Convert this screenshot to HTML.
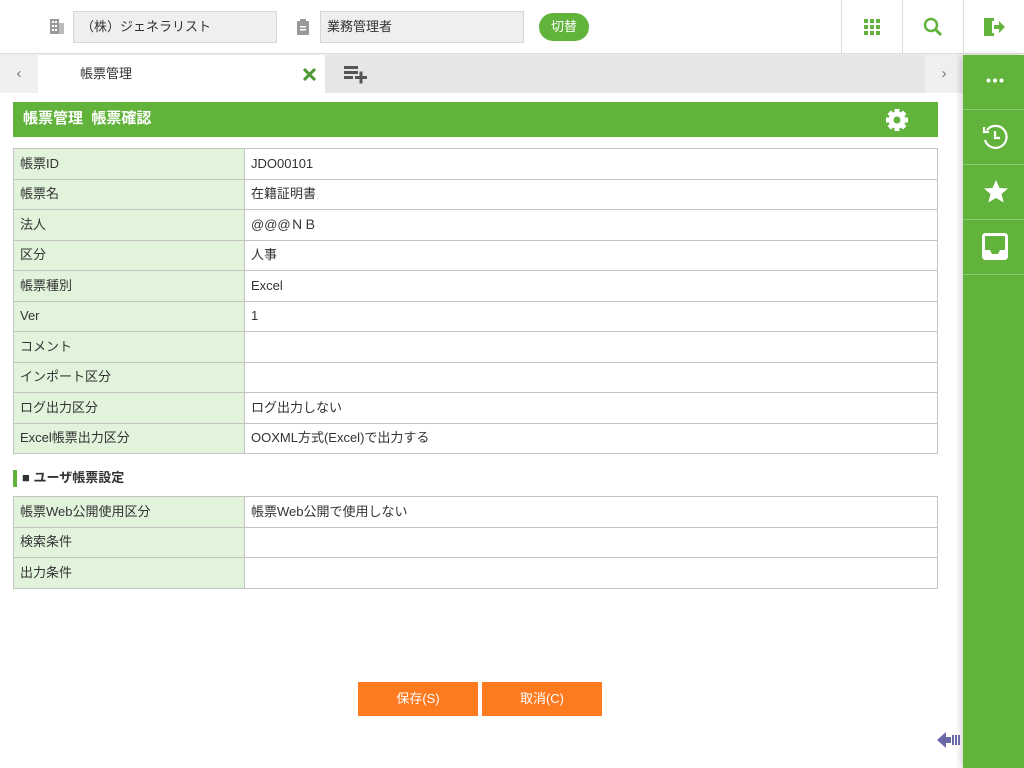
<!DOCTYPE html>
<html><head><meta charset="utf-8"><style>
*{margin:0;padding:0;box-sizing:border-box}
body{width:1024px;height:768px;position:relative;background:#fff;font-family:"Liberation Sans","Noto Sans CJK JP",sans-serif;font-size:13px;color:#333;overflow:hidden}
.abs{position:absolute}
.inp{position:absolute;top:11px;height:32px;background:#efefef;border:1px solid #d6d6d6;padding-left:7px;line-height:30px;font-size:13px;color:#333}
.sep{position:absolute;top:0;width:1px;height:54px;background:#ddd}
table{border-collapse:collapse;position:absolute;left:13px;width:925px}
td{border:1px solid #c4c4c4;height:30.5px;padding:0 6px;font-size:13px;color:#333;vertical-align:middle;line-height:14px}
td.h{background:#e2f3dc;width:231px}
.side div{height:55px;border-bottom:1px solid #8cc870}
.btn{position:absolute;top:682px;width:120px;height:34px;background:#fd7a21;color:#fff;text-align:center;line-height:34px;font-size:13px}
</style></head><body>
<div class="abs" style="left:0;top:0;width:1024px;height:54px;border-bottom:1px solid #ddd;box-shadow:0 1px 3px rgba(0,0,0,.12)"></div>
<svg class="abs" style="left:49px;top:18px" width="16" height="18"><rect x="1" y="1" width="9" height="15" fill="#999"/><rect x="10" y="5" width="5" height="11" fill="#bbb"/><g fill="#fff"><rect x="3" y="3" width="2" height="2"/><rect x="6" y="3" width="2" height="2"/><rect x="3" y="7" width="2" height="2"/><rect x="6" y="7" width="2" height="2"/><rect x="3" y="11" width="2" height="2"/><rect x="6" y="11" width="2" height="2"/></g></svg>
<div class="inp" style="left:73px;width:204px">（株）ジェネラリスト</div>
<svg class="abs" style="left:296px;top:19px" width="14" height="17"><rect x="1" y="2" width="12" height="14" rx="1" fill="#999"/><rect x="4" y="0" width="6" height="4" fill="#999"/><g fill="#fff"><rect x="4" y="7" width="6" height="1.5"/><rect x="4" y="10" width="6" height="1.5"/></g></svg>
<div class="inp" style="left:320px;width:204px;padding-left:6px">業務管理者</div>
<div class="abs" style="left:539px;top:13px;width:50px;height:28px;border-radius:14px;background:#62b33c;color:#fff;text-align:center;line-height:28px;font-size:13px">切替</div>
<div class="sep" style="left:841px"></div><div class="sep" style="left:902px"></div><div class="sep" style="left:963px"></div>
<svg class="abs" style="left:864px;top:19px" width="16" height="16" fill="#62b33c"><rect x="0" y="0" width="4" height="4"/><rect x="6" y="0" width="4" height="4"/><rect x="12" y="0" width="4" height="4"/><rect x="0" y="6" width="4" height="4"/><rect x="6" y="6" width="4" height="4"/><rect x="12" y="6" width="4" height="4"/><rect x="0" y="12" width="4" height="4"/><rect x="6" y="12" width="4" height="4"/><rect x="12" y="12" width="4" height="4"/></svg>
<svg class="abs" style="left:923px;top:17px" width="20" height="20" fill="none" stroke="#62b33c" stroke-width="2.5"><circle cx="8" cy="8" r="6"/><path d="M12.5 12.5L18 18" stroke-width="3"/></svg>
<svg class="abs" style="left:983px;top:17px" width="22" height="20" fill="#62b33c"><path d="M1 1h10v3H6v12h5v3H1z"/><path d="M3 2l6 2v15l-6-2z"/><path d="M11 8h5V4l6 6-6 6v-4h-5z"/></svg>
<div class="abs" style="left:0;top:55px;width:963px;height:38px;background:#e6e6e6"></div>
<div class="abs" style="left:0;top:55px;width:38px;height:38px;background:#efefef;color:#777;text-align:center;line-height:38px;font-size:15px">‹</div>
<div class="abs" style="left:925px;top:55px;width:38px;height:38px;background:#efefef;color:#777;text-align:center;line-height:38px;font-size:15px">›</div>
<div class="abs" style="left:38px;top:55px;width:287px;height:38px;background:#fff;line-height:38px;padding-left:42px;font-size:13px">帳票管理</div>
<svg class="abs" style="left:303px;top:68px" width="13" height="13" stroke="#4f9a36" stroke-width="3"><path d="M1 1L12 12M12 1L1 12"/></svg>
<svg class="abs" style="left:344px;top:66px" width="24" height="18" fill="#555"><rect x="0" y="0" width="14" height="3"/><rect x="0" y="5" width="14" height="3"/><rect x="0" y="10" width="9" height="3"/><rect x="11" y="10" width="12" height="3"/><rect x="15.5" y="5.5" width="3" height="12"/></svg>
<div class="abs side" style="left:963px;top:55px;width:61px;height:713px;background:#62b33c;box-shadow:-3px 0 5px rgba(0,0,0,.15)">
<div></div><div></div><div></div><div></div></div>
<svg class="abs" style="left:986px;top:78px" width="18" height="5" fill="#fff"><circle cx="2.5" cy="2.5" r="2"/><circle cx="9" cy="2.5" r="2"/><circle cx="15.5" cy="2.5" r="2"/></svg>
<svg class="abs" style="left:981px;top:123px" width="28" height="28" fill="none" stroke="#fff" stroke-width="2.2"><path d="M6 7A11 11 0 1 1 4 17"/><path d="M3 4l0 5 5 0"/><path d="M14 8v7h5"/></svg>
<svg class="abs" style="left:983px;top:179px" width="26" height="25" fill="#fff"><path d="M13 1l3.5 8 8.5.5-6.5 5.5 2.2 8.5L13 19l-7.7 4.5 2.2-8.5L1 9.5l8.5-.5z"/></svg>
<svg class="abs" style="left:982px;top:233px" width="26" height="27"><rect x="1.5" y="1.5" width="23" height="24" rx="2" fill="none" stroke="#fff" stroke-width="3"/><path d="M1 17h7l2 4h6l2-4h7v9H1z" fill="#fff"/></svg>
<div class="abs" style="left:13px;top:102px;width:925px;height:35px;background:#62b33c;color:#fff;font-weight:bold;font-size:15px;line-height:33px;padding-left:10px">帳票管理&nbsp;&nbsp;帳票確認</div>
<svg class="abs" style="left:885px;top:108px" width="24" height="24" viewBox="0 0 24 24"><g fill="#fff"><rect x="9.5" y="1" width="5" height="22"/><rect x="9.5" y="1" width="5" height="22" transform="rotate(45 12 12)"/><rect x="9.5" y="1" width="5" height="22" transform="rotate(90 12 12)"/><rect x="9.5" y="1" width="5" height="22" transform="rotate(135 12 12)"/><circle cx="12" cy="12" r="8.5"/></g><circle cx="12" cy="12" r="3.5" fill="#62b33c"/></svg>
<table style="top:148px">
<tr><td class="h">帳票ID</td><td>JDO00101</td></tr>
<tr><td class="h">帳票名</td><td>在籍証明書</td></tr>
<tr><td class="h">法人</td><td>@@@ＮＢ</td></tr>
<tr><td class="h">区分</td><td>人事</td></tr>
<tr><td class="h">帳票種別</td><td>Excel</td></tr>
<tr><td class="h">Ver</td><td>1</td></tr>
<tr><td class="h">コメント</td><td></td></tr>
<tr><td class="h">インポート区分</td><td></td></tr>
<tr><td class="h">ログ出力区分</td><td>ログ出力しない</td></tr>
<tr><td class="h">Excel帳票出力区分</td><td>OOXML方式(Excel)で出力する</td></tr>
</table>
<div class="abs" style="left:13px;top:470px;width:4px;height:17px;background:#62b33c"></div>
<div class="abs" style="left:22px;top:469px;font-weight:bold;font-size:13px;line-height:18px">■ ユーザ帳票設定</div>
<table style="top:496px">
<tr><td class="h">帳票Web公開使用区分</td><td>帳票Web公開で使用しない</td></tr>
<tr><td class="h">検索条件</td><td></td></tr>
<tr><td class="h">出力条件</td><td></td></tr>
</table>
<div class="btn" style="left:358px">保存(S)</div>
<div class="btn" style="left:482px">取消(C)</div>
<svg class="abs" style="left:937px;top:730px" width="26" height="20"><path d="M0 10L9 2v5h5v6H9v5z" fill="#6b6aa8"/><rect x="15" y="5" width="2" height="10" fill="#6b6aa8"/><rect x="18" y="5" width="2" height="10" fill="#6b6aa8"/><rect x="21" y="5" width="2" height="10" fill="#6b6aa8"/></svg>
</body></html>
